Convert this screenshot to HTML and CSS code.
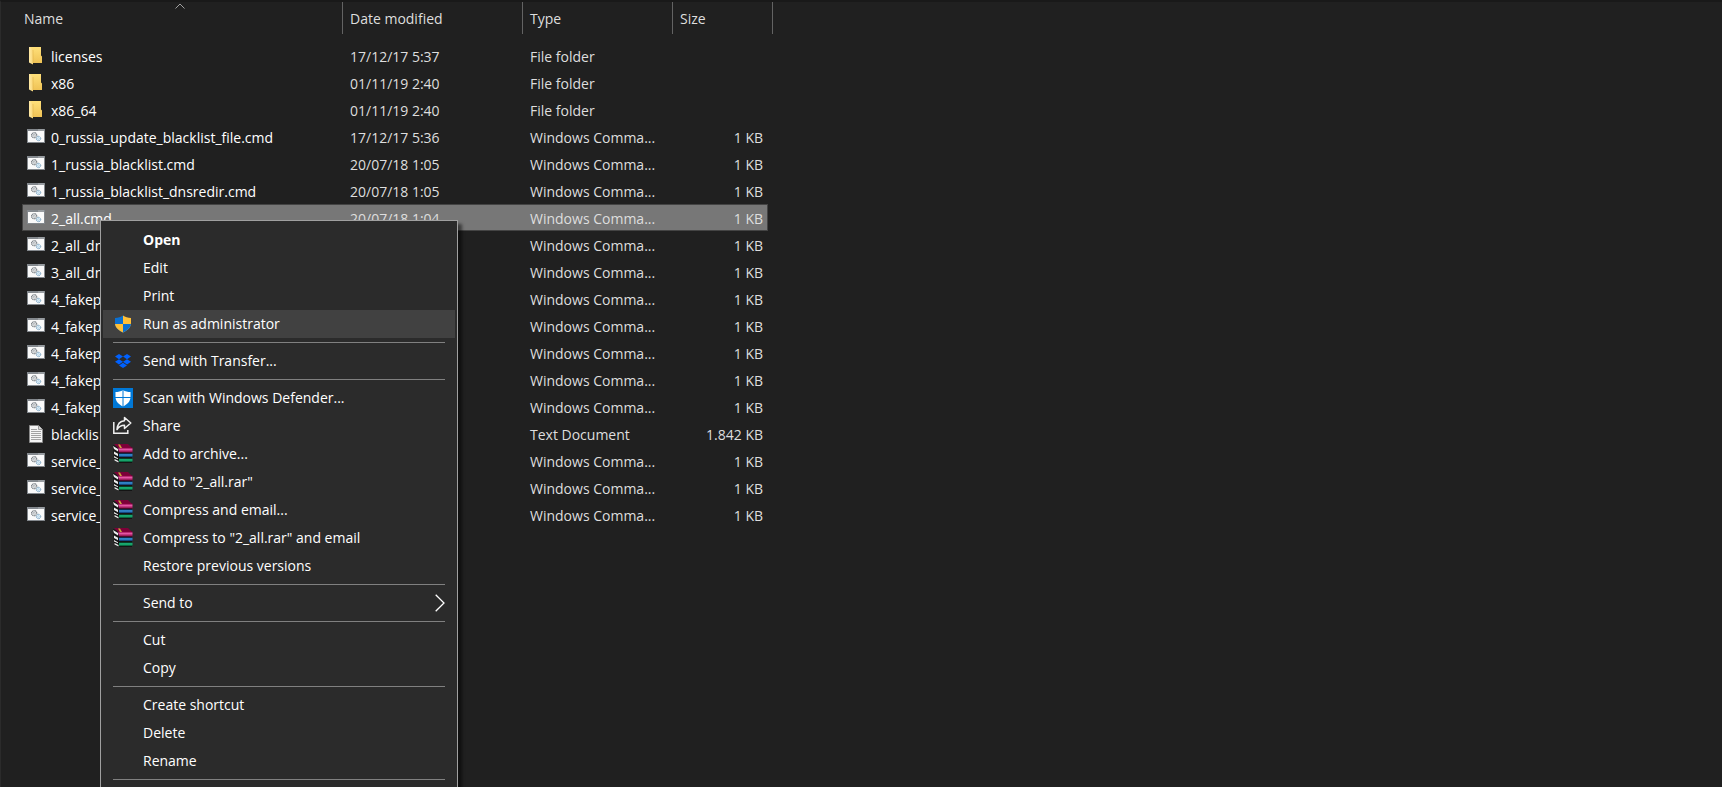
FILE: index.html
```html
<!DOCTYPE html>
<html lang="en">
<head>
  <meta charset="UTF-8">
  <meta name="viewport" content="width=device-width, initial-scale=1.0">
  <title>File Explorer</title>
  <link rel="stylesheet" href="styles.css">
</head>
<body>
  <!-- Shared icons -->
  <svg class="defs" width="0" height="0" aria-hidden="true">
    <defs>
      <linearGradient id="foldFront" x1="0" y1="0" x2="1" y2="0">
        <stop offset="0" stop-color="#ffe9a6"/>
        <stop offset="1" stop-color="#fbd978"/>
      </linearGradient>
      <linearGradient id="foldBack" x1="0" y1="0" x2="0" y2="1">
        <stop offset="0" stop-color="#ffe07a"/>
        <stop offset="1" stop-color="#efc255"/>
      </linearGradient>
      <linearGradient id="red" x1="0" y1="0" x2="0" y2="1">
        <stop offset="0" stop-color="#8a0042"/>
        <stop offset=".4" stop-color="#e455a4"/>
        <stop offset="1" stop-color="#80003c"/>
      </linearGradient>
      <linearGradient id="blue" x1="0" y1="0" x2="0" y2="1">
        <stop offset="0" stop-color="#0c3f80"/>
        <stop offset=".4" stop-color="#3c9be0"/>
        <stop offset="1" stop-color="#0a2f66"/>
      </linearGradient>
      <linearGradient id="green" x1="0" y1="0" x2="0" y2="1">
        <stop offset="0" stop-color="#04603a"/>
        <stop offset=".4" stop-color="#1fc583"/>
        <stop offset="1" stop-color="#034a2a"/>
      </linearGradient>
    </defs>
    <symbol id="folder" viewBox="0 0 18 18">
      <path d="M3 0h11v8.500l1 1V16H3z" fill="url(#foldBack)"/>
      <path d="M2 0h1l3 3v14.500L2 15.500z" fill="url(#foldFront)"/>
      <path d="M6 3v13" stroke="#e0b24a" stroke-width=".6"/>
    </symbol>
    <symbol id="cmd" viewBox="0 0 18 18">
      <path d="M0 1h18v14H0z" fill="#83888d"/>
      <path d="M1 3h16v11H1z" fill="#fafafa"/>
      <path d="M11.500 2h1M13.500 2h1M15.500 2h1" stroke="#d5d8da"/>
      <circle cx="7.200" cy="7.200" r="2.600" fill="#e6e9eb" stroke="#6f757a" stroke-width="1.100" stroke-dasharray="1.100 .5"/>
      <circle cx="7.200" cy="7.200" r="1" fill="#fff" stroke="#8b9196" stroke-width=".6"/>
      <circle cx="11.500" cy="10.500" r="2.200" fill="#dff0fb" stroke="#6b98b8" stroke-width="1" stroke-dasharray="1 .5"/>
      <circle cx="11.500" cy="10.500" r=".8" fill="#fff" stroke="#8ab4d0" stroke-width=".5"/>
    </symbol>
    <symbol id="doc" viewBox="0 0 18 18">
      <path d="M2.500.5h9l4 4v13h-13z" fill="#f5f5f5" stroke="#8a8a8a"/>
      <path d="M11.500.5v4h4" fill="#d9d9d9" stroke="#8a8a8a" stroke-width=".8"/>
      <path d="M4 4.500h6M4 6.500h10M4 8.500h10M4 10.500h10M4 12.500h10M4 14.500h10" stroke="#989898" stroke-width=".9"/>
    </symbol>
    <symbol id="shield" viewBox="0 0 20 20">
      <path d="M10 1.500C8 3 5 4 2 4v5c0 4.500 3.500 7.500 8 9.500z" fill="#0b6fd0"/>
      <path d="M10 1.500C12 3 15 4 18 4v5c0 4.500-3.500 7.500-8 9.500z" fill="#ffbf37"/>
      <path d="M2 10h8v8.500C6 16.700 2.500 14 2 10z" fill="#ffbf37"/>
      <path d="M18 10h-8v8.500c4-1.800 7.500-4.500 8-8.500z" fill="#0b6fd0"/>
    </symbol>
    <symbol id="dropbox" viewBox="0 0 20 20">
      <path d="M6 3l4 2.600-4 2.600-4-2.600zM14 3l4 2.600-4 2.600-4-2.600zM6 8.200l4 2.600-4 2.600-4-2.600zM14 8.200l4 2.600-4 2.600-4-2.600zM10 11.800l4 2.600-4 2.600-4-2.600z" fill="#0061fe"/>
    </symbol>
    <symbol id="defender" viewBox="0 0 20 20">
      <path d="M0 0h20v20H0z" fill="#0078d7"/>
      <path d="M10 2C8 3.500 5 4 2.500 4v5c0 4.500 3.500 7.500 7.500 9.500 4-2 7.500-5 7.500-9.500V4C15 4 12 3.500 10 2z" fill="#fff"/>
      <path d="M10 1v18M1 9.500h18" stroke="#0078d7"/>
    </symbol>
    <symbol id="share" viewBox="0 0 20 20">
      <path d="M.8 6v11.200h14V14" fill="none" stroke="#f0f0f0" stroke-width="1.500"/>
      <path d="M11.500 1.500l6.300 5.500-6.300 5.500V9.300C8 9.300 5.800 10.500 4 13.500 4.400 8.500 7 5 11.500 4.700z" fill="none" stroke="#f0f0f0" stroke-width="1.500" stroke-linejoin="round"/>
    </symbol>
    <symbol id="rar" viewBox="0 0 20 20">
      <path d="M0 1l6 2h13v16H6l-5-3z" fill="#141414"/>
      <path d="M1 0h14l4 4H5z" fill="#7c0038"/>
      <path d="M5 3.500h14.500v5H6z" fill="url(#red)"/>
      <path d="M6 9.500h13.500V13H6z" fill="url(#blue)"/>
      <path d="M6 14.500h13.500V18H6z" fill="url(#green)"/>
      <path d="M0 2l5 3v2.500L1 5zM1 7.500l4 2.200v2.600L1 10zM1 12l4 2.200v1L1 13.500zM1.500 15l4 2v1.500l-4-2z" fill="#ececec"/>
      <path d="M5 .5h2l2 3.500H7z" fill="#c9a23c"/>
    </symbol>
  </svg>

  <main class="explorer">
    <table class="files">
      <colgroup>
        <col class="col-name">
        <col class="col-date">
        <col class="col-type">
        <col class="col-size">
      </colgroup>
      <thead>
        <tr>
          <th><span class="head head-name">Name<svg class="sort" viewBox="0 0 10 6"><path d="M.5 5.500L5 1l4.500 4.500"/></svg></span></th>
          <th><span class="head">Date modified</span></th>
          <th><span class="head">Type</span></th>
          <th><span class="head head-size">Size</span></th>
        </tr>
      </thead>
      <tbody>
        <tr><td><span class="file"><svg><use href="#folder"/></svg>licenses</span></td><td>17/12/17 5:37</td><td>File folder</td><td></td></tr>
        <tr><td><span class="file"><svg><use href="#folder"/></svg>x86</span></td><td>01/11/19 2:40</td><td>File folder</td><td></td></tr>
        <tr><td><span class="file"><svg><use href="#folder"/></svg>x86_64</span></td><td>01/11/19 2:40</td><td>File folder</td><td></td></tr>
        <tr><td><span class="file"><svg><use href="#cmd"/></svg>0_russia_update_blacklist_file.cmd</span></td><td>17/12/17 5:36</td><td>Windows Comma...</td><td>1 KB</td></tr>
        <tr><td><span class="file"><svg><use href="#cmd"/></svg>1_russia_blacklist.cmd</span></td><td>20/07/18 1:05</td><td>Windows Comma...</td><td>1 KB</td></tr>
        <tr><td><span class="file"><svg><use href="#cmd"/></svg>1_russia_blacklist_dnsredir.cmd</span></td><td>20/07/18 1:05</td><td>Windows Comma...</td><td>1 KB</td></tr>
        <tr class="selected"><td><span class="file"><svg><use href="#cmd"/></svg>2_all.cmd</span></td><td>20/07/18 1:04</td><td>Windows Comma...</td><td>1 KB</td></tr>
        <tr><td><span class="file"><svg><use href="#cmd"/></svg>2_all_dn</span></td><td></td><td>Windows Comma...</td><td>1 KB</td></tr>
        <tr><td><span class="file"><svg><use href="#cmd"/></svg>3_all_dn</span></td><td></td><td>Windows Comma...</td><td>1 KB</td></tr>
        <tr><td><span class="file"><svg><use href="#cmd"/></svg>4_fakep</span></td><td></td><td>Windows Comma...</td><td>1 KB</td></tr>
        <tr><td><span class="file"><svg><use href="#cmd"/></svg>4_fakep</span></td><td></td><td>Windows Comma...</td><td>1 KB</td></tr>
        <tr><td><span class="file"><svg><use href="#cmd"/></svg>4_fakep</span></td><td></td><td>Windows Comma...</td><td>1 KB</td></tr>
        <tr><td><span class="file"><svg><use href="#cmd"/></svg>4_fakep</span></td><td></td><td>Windows Comma...</td><td>1 KB</td></tr>
        <tr><td><span class="file"><svg><use href="#cmd"/></svg>4_fakep</span></td><td></td><td>Windows Comma...</td><td>1 KB</td></tr>
        <tr><td><span class="file"><svg><use href="#doc"/></svg>blacklis</span></td><td></td><td>Text Document</td><td>1.842 KB</td></tr>
        <tr><td><span class="file"><svg><use href="#cmd"/></svg>service_</span></td><td></td><td>Windows Comma...</td><td>1 KB</td></tr>
        <tr><td><span class="file"><svg><use href="#cmd"/></svg>service_</span></td><td></td><td>Windows Comma...</td><td>1 KB</td></tr>
        <tr><td><span class="file"><svg><use href="#cmd"/></svg>service_</span></td><td></td><td>Windows Comma...</td><td>1 KB</td></tr>
      </tbody>
    </table>

    <div class="menu" role="menu">
      <button type="button" role="menuitem" class="default">Open</button>
      <button type="button" role="menuitem">Edit</button>
      <button type="button" role="menuitem">Print</button>
      <button type="button" role="menuitem" class="active"><svg><use href="#shield"/></svg>Run as administrator</button>
      <hr>
      <button type="button" role="menuitem"><svg><use href="#dropbox"/></svg>Send with Transfer...</button>
      <hr>
      <button type="button" role="menuitem"><svg><use href="#defender"/></svg>Scan with Windows Defender...</button>
      <button type="button" role="menuitem"><svg><use href="#share"/></svg>Share</button>
      <button type="button" role="menuitem"><svg><use href="#rar"/></svg>Add to archive...</button>
      <button type="button" role="menuitem"><svg><use href="#rar"/></svg>Add to "2_all.rar"</button>
      <button type="button" role="menuitem"><svg><use href="#rar"/></svg>Compress and email...</button>
      <button type="button" role="menuitem"><svg><use href="#rar"/></svg>Compress to "2_all.rar" and email</button>
      <button type="button" role="menuitem">Restore previous versions</button>
      <hr>
      <button type="button" role="menuitem">Send to<svg class="more" viewBox="0 0 10 18"><path d="M.7.700L9 9 .7 17.300"/></svg></button>
      <hr>
      <button type="button" role="menuitem">Cut</button>
      <button type="button" role="menuitem">Copy</button>
      <hr>
      <button type="button" role="menuitem">Create shortcut</button>
      <button type="button" role="menuitem">Delete</button>
      <button type="button" role="menuitem">Rename</button>
      <hr>
    </div>
  </main>
</body>
</html>
```

FILE: styles.css
```css
* {
  box-sizing: border-box;
}
body {
  margin: 0;
  background: #202020;
  color: #dedede;
  font-family: "Segoe UI", "Open Sans", "Noto Sans", sans-serif;
  font-size: 14px;
  line-height: 20px;
}
.defs {
  position: absolute;
}
.explorer {
  position: relative;
  height: 100vh;
  overflow: hidden;
  padding-left: 21px;
  border-top: 2px solid #191919;
  border-left: 1px solid #2b2b2b;
}

/* File list */
.files {
  width: 746px;
  table-layout: fixed;
  border-collapse: collapse;
}
.col-name {
  width: 321px;
}
.col-date {
  width: 180px;
}
.col-type {
  width: 150px;
}
.col-size {
  width: 95px;
}
th {
  height: 40px;
  padding: 0;
  font-weight: normal;
  text-align: left;
  vertical-align: top;
}
.head {
  display: block;
  height: 32px;
  padding: 7px 0 0 7px;
  border-right: 1px solid #636363;
}
.head-name {
  position: relative;
  padding-left: 2px;
}
.head-size {
  width: 100px;
}
.sort {
  position: absolute;
  top: 1px;
  left: 153px;
  width: 10px;
  height: 6px;
  fill: none;
  stroke: #a0a0a0;
}
td {
  height: 27px;
  padding: 2px 0 0 7px;
  white-space: nowrap;
}
td:first-child {
  padding-left: 5px;
  color: #fff;
}
td:last-child {
  padding-right: 5px;
  text-align: right;
}
.file {
  display: flex;
  gap: 6px;
}
.file svg {
  width: 18px;
  height: 18px;
}
.selected {
  background: #777;
  outline: 1px solid #444;
  outline-offset: -1px;
}

/* Context menu */
.menu {
  position: absolute;
  top: 218px;
  bottom: 0;
  left: 99px;
  width: 358px;
  padding: 5px 2px;
  overflow: hidden;
  background: #2b2b2b;
  border: 1px solid #a0a0a0;
  border-bottom: none;
  box-shadow: 4px 4px 3px rgba(0, 0, 0, 0.5);
}
.menu button {
  position: relative;
  display: block;
  width: 100%;
  height: 28px;
  padding: 0 0 0 40px;
  border: none;
  background: none;
  color: #fff;
  font: inherit;
  text-align: left;
  cursor: default;
}
.menu button:hover,
.menu .active {
  background: #414141;
}
.menu .default {
  font-weight: bold;
}
.menu svg {
  position: absolute;
  top: 4px;
  left: 10px;
  width: 20px;
  height: 20px;
}
.menu .more {
  top: 5px;
  right: 10px;
  left: auto;
  width: 10px;
  height: 18px;
  fill: none;
  stroke: #fff;
  stroke-width: 1.3;
}
.menu hr {
  height: 1px;
  margin: 4px 10px;
  border: none;
  background: #808080;
}
```
